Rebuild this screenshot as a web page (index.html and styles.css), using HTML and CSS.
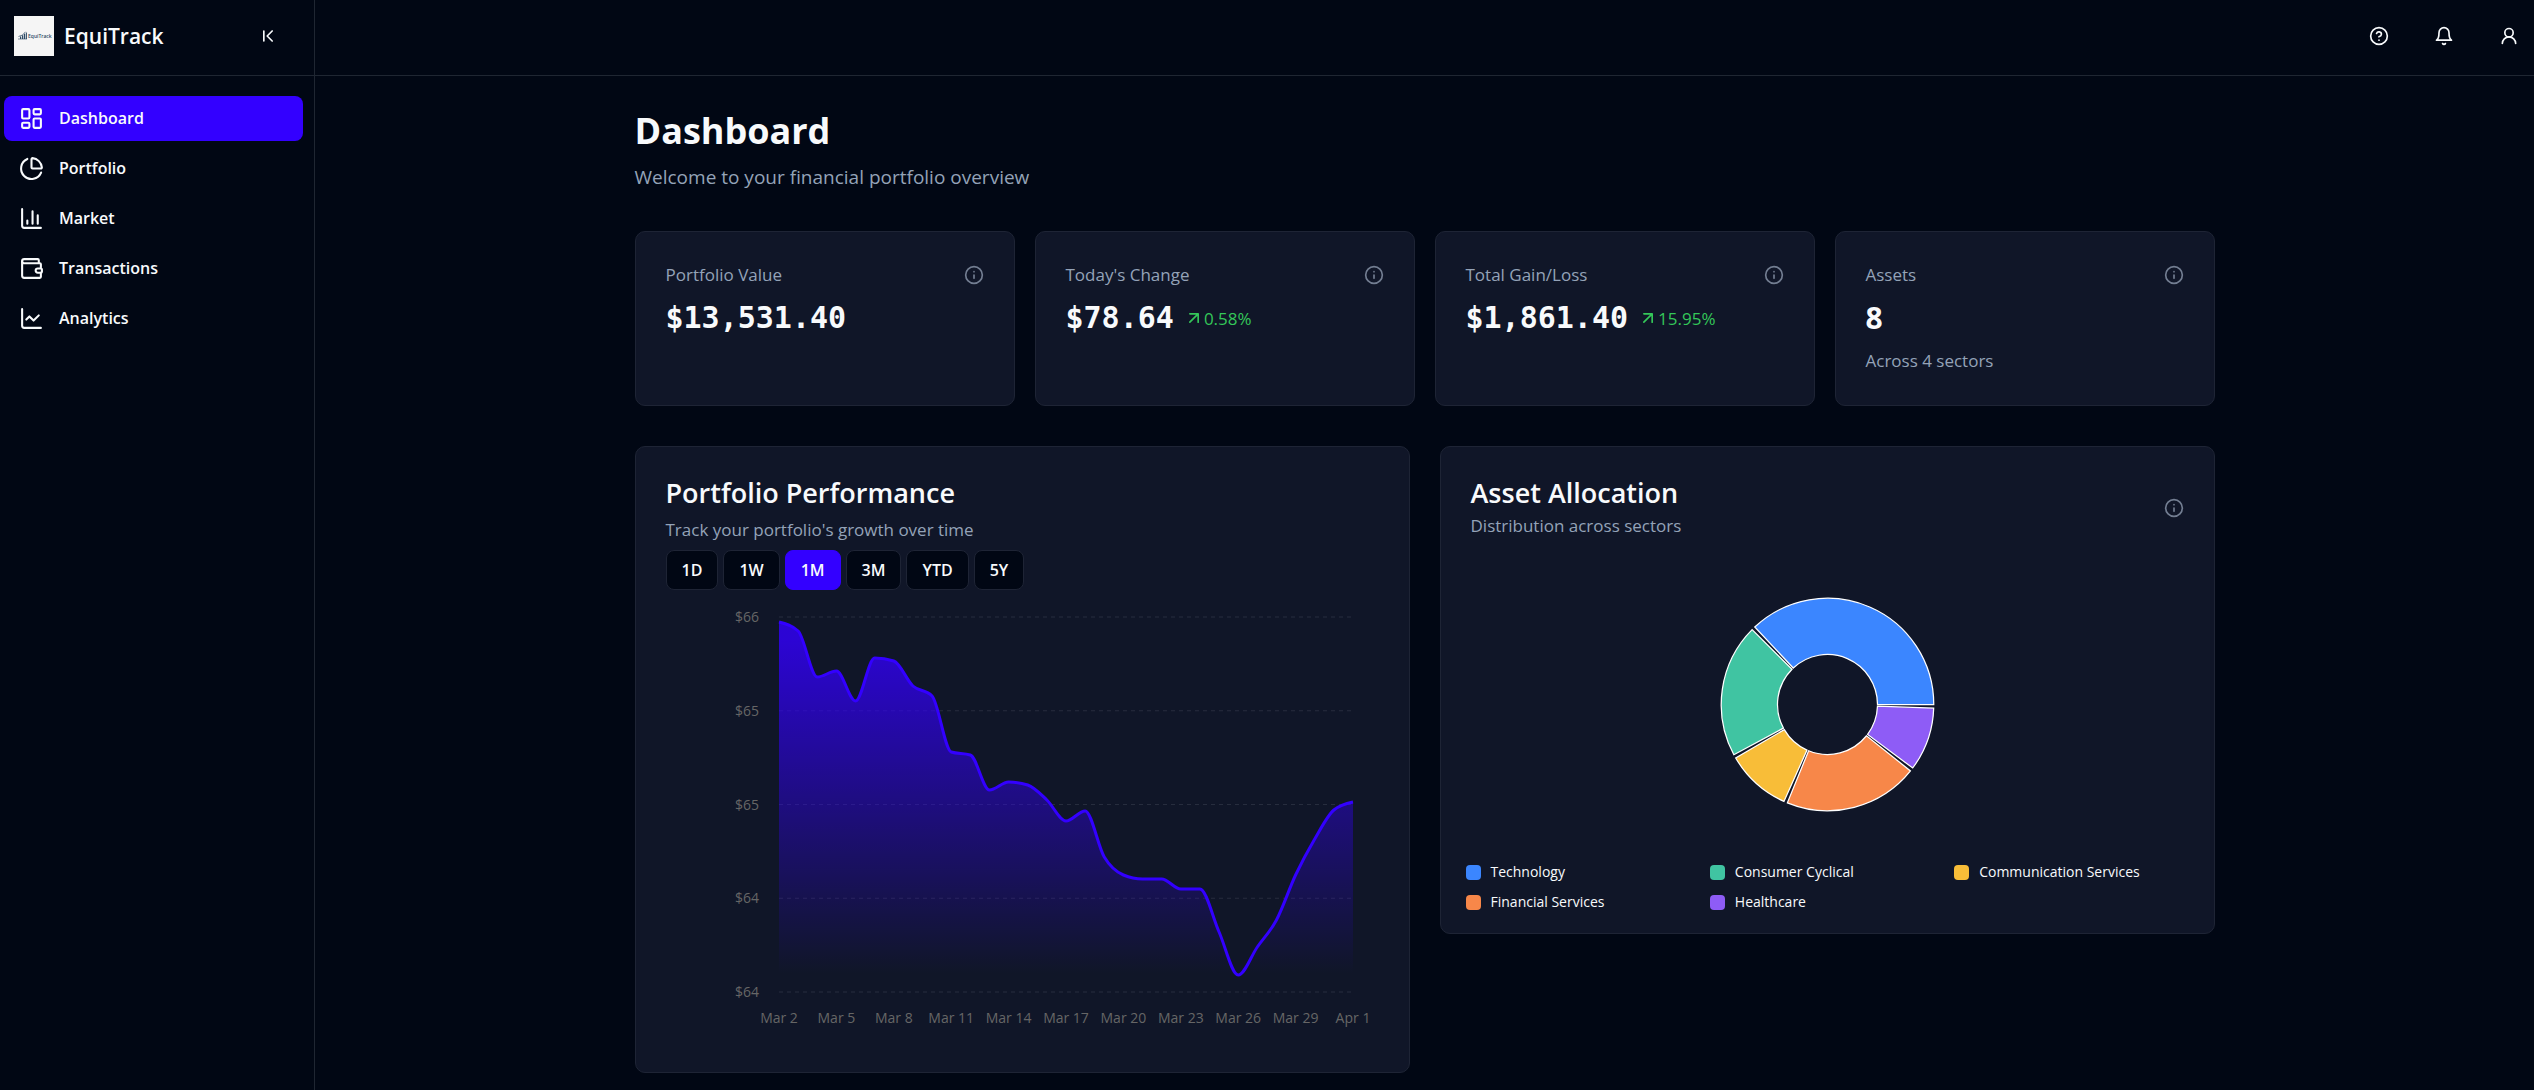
FILE: index.html
```html
<!DOCTYPE html>
<html lang="en">
<head>
<meta charset="utf-8">
<meta name="viewport" content="width=device-width, initial-scale=1">
<title>EquiTrack</title>
<link rel="stylesheet" href="styles.css">
</head>
<body>
<svg class="sprite" aria-hidden="true">
  <symbol id="i-info" viewBox="0 0 24 24"><circle cx="12" cy="12" r="10"/><path d="M12 16v-4M12 8h.01"/></symbol>
</svg>
<div class="app">
  <aside class="sidebar">
    <div class="brand">
      <svg class="logo" viewBox="0 0 40 40" role="img" aria-label="EquiTrack logo">
        <rect width="40" height="40" fill="#f5f5f5"/>
        <g fill="#2d4a66"><path d="M6 20.500h1.200V23H6zM8 19.200h1.300V23H8zM10 17.800h1.200V23H10zM11.900 16.500h1V23h-1z"/><path d="M4.500 20.500Q9 20 11.500 15.800" fill="none" stroke="#2d4a66" stroke-width=".7"/><path d="M4 23h9" stroke="#2d4a66" stroke-width=".6"/></g>
        <text class="logo-text" x="14" y="22">EquiTrack</text>
      </svg>
      <span class="brand-name">EquiTrack</span>
      <button class="icon-button collapse" type="button" aria-label="Collapse sidebar"><svg class="icon" viewBox="0 0 24 24"><path d="m17 18-6-6 6-6M7 6v12"/></svg></button>
    </div>
    <nav class="nav">
      <a class="nav-item active" href="#dashboard"><svg class="icon nav-icon" viewBox="0 0 24 24"><rect width="7" height="9" x="3" y="3" rx="1"/><rect width="7" height="5" x="14" y="3" rx="1"/><rect width="7" height="9" x="14" y="12" rx="1"/><rect width="7" height="5" x="3" y="16" rx="1"/></svg>Dashboard</a>
      <a class="nav-item" href="#portfolio"><svg class="icon nav-icon" viewBox="0 0 24 24"><path d="M21 12c.552 0 1.005-.449.95-.998a10 10 0 0 0-8.953-8.951c-.55-.055-.998.398-.998.95v8a1 1 0 0 0 1 1z"/><path d="M21.210 15.890A10 10 0 1 1 8 2.830"/></svg>Portfolio</a>
      <a class="nav-item" href="#market"><svg class="icon nav-icon" viewBox="0 0 24 24"><path d="M3 3v16a2 2 0 0 0 2 2h16M18 17V9M13 17V5M8 17v-3"/></svg>Market</a>
      <a class="nav-item" href="#transactions"><svg class="icon nav-icon" viewBox="0 0 24 24"><path d="M19 7V4a1 1 0 0 0-1-1H5a2 2 0 0 0 0 4h15a1 1 0 0 1 1 1v4h-3a2 2 0 0 0 0 4h3a1 1 0 0 0 1-1v-2a1 1 0 0 0-1-1"/><path d="M3 5v14a2 2 0 0 0 2 2h15a1 1 0 0 0 1-1v-4"/></svg>Transactions</a>
      <a class="nav-item" href="#analytics"><svg class="icon nav-icon" viewBox="0 0 24 24"><path d="M3 3v16a2 2 0 0 0 2 2h16M19 9l-5 5-4-4-3 3"/></svg>Analytics</a>
    </nav>
  </aside>

  <div class="page">
    <header class="topbar">
      <button class="icon-button" type="button" aria-label="Help"><svg class="icon" viewBox="0 0 24 24"><circle cx="12" cy="12" r="10"/><path d="M9.090 9a3 3 0 0 1 5.830 1c0 2-3 3-3 3M12 17h.01"/></svg></button>
      <button class="icon-button" type="button" aria-label="Notifications"><svg class="icon" viewBox="0 0 24 24"><path d="M6 8a6 6 0 0 1 12 0c0 7 3 9 3 9H3s3-2 3-9M10.300 21a1.940 1.940 0 0 0 3.400 0"/></svg></button>
      <button class="icon-button" type="button" aria-label="Account"><svg class="icon" viewBox="0 0 24 24"><circle cx="12" cy="8" r="5"/><path d="M20 21a8 8 0 0 0-16 0"/></svg></button>
    </header>

    <main class="content">
      <div class="intro">
        <h1>Dashboard</h1>
        <p class="lead">Welcome to your financial portfolio overview</p>
      </div>

      <section class="stats">
        <article class="card stat">
          <div class="stat-head"><h2 class="label">Portfolio Value</h2><svg class="icon info"><use href="#i-info"/></svg></div>
          <div class="stat-row"><span class="money">$13,531.40</span></div>
        </article>
        <article class="card stat">
          <div class="stat-head"><h2 class="label">Today's Change</h2><svg class="icon info"><use href="#i-info"/></svg></div>
          <div class="stat-row"><span class="money">$78.64</span><span class="gain"><svg class="icon" viewBox="0 0 24 24"><path d="M7 7h10v10M7 17 17 7"/></svg>0.58%</span></div>
        </article>
        <article class="card stat">
          <div class="stat-head"><h2 class="label">Total Gain/Loss</h2><svg class="icon info"><use href="#i-info"/></svg></div>
          <div class="stat-row"><span class="money">$1,861.40</span><span class="gain"><svg class="icon" viewBox="0 0 24 24"><path d="M7 7h10v10M7 17 17 7"/></svg>15.95%</span></div>
        </article>
        <article class="card stat">
          <div class="stat-head"><h2 class="label">Assets</h2><svg class="icon info"><use href="#i-info"/></svg></div>
          <div class="stat-row"><span class="count">8</span></div>
          <p class="muted">Across 4 sectors</p>
        </article>
      </section>

      <section class="charts">
        <article class="card performance">
          <h2 class="card-title">Portfolio Performance</h2>
          <p class="muted">Track your portfolio's growth over time</p>
          <div class="ranges">
            <button class="range" type="button">1D</button>
            <button class="range" type="button">1W</button>
            <button class="range selected" type="button">1M</button>
            <button class="range" type="button">3M</button>
            <button class="range" type="button">YTD</button>
            <button class="range" type="button">5Y</button>
          </div>
          <svg class="area-chart" id="area-chart" viewBox="0 0 713 452" role="img" aria-label="Portfolio value, Mar 2 to Apr 1">
            <defs><linearGradient id="fill" x1="0" y1="0" x2="0" y2="1"><stop offset="5%" stop-color="#3300ff" stop-opacity=".8"/><stop offset="95%" stop-color="#3300ff" stop-opacity="0"/></linearGradient></defs>
            <g class="grid-lines"></g>
            <path class="area"/>
            <path class="line"/>
            <g class="ticks"></g>
          </svg>
        </article>

        <article class="card allocation">
          <div class="allocation-head">
            <div>
              <h2 class="card-title">Asset Allocation</h2>
              <p class="muted">Distribution across sectors</p>
            </div>
            <svg class="icon info"><use href="#i-info"/></svg>
          </div>
          <svg class="donut" id="donut" viewBox="-86 -86 172 172" role="img" aria-label="Asset allocation by sector"></svg>
          <ul class="legend">
            <li><span class="swatch technology"></span>Technology</li>
            <li><span class="swatch consumer"></span>Consumer Cyclical</li>
            <li><span class="swatch communication"></span>Communication Services</li>
            <li><span class="swatch financial"></span>Financial Services</li>
            <li><span class="swatch healthcare"></span>Healthcare</li>
          </ul>
        </article>
      </section>
    </main>
  </div>
</div>
<script src="script.js"></script>
</body>
</html>
```
FILE: styles.css
```css
:root {
  --bg: #010714;
  --card: #101628;
  --border: #1e2435;
  --rule: #1f2632;
  --text: #f8fafc;
  --muted: #94a3b8;
  --info: #737e92;
  --primary: #3300ff;
  --green: #34c759;
  --technology: #3b86ff;
  --consumer: #40c4a2;
  --communication: #f8bd38;
  --financial: #f78749;
  --healthcare: #8e5cf6;
}

* { box-sizing: border-box; }

body {
  margin: 0;
  background: var(--bg);
  color: var(--text);
  font: 17px/25px "Open Sans", "Noto Sans", sans-serif;
}

h1, h2, p, ul { margin: 0; padding: 0; }
button { font: inherit; color: inherit; cursor: pointer; }

.sprite { display: none; }

.icon {
  width: 20px;
  height: 20px;
  flex: none;
  fill: none;
  stroke: currentColor;
  stroke-width: 2;
  stroke-linecap: round;
  stroke-linejoin: round;
}

.info { color: var(--info); }

.app { display: flex; min-height: 100vh; }

.sidebar {
  width: 315px;
  flex: none;
  border-right: 1px solid var(--rule);
}

.brand {
  display: flex;
  align-items: center;
  gap: 10px;
  height: 76px;
  padding: 0 21px 4px 14px;
  border-bottom: 1px solid var(--rule);
}

.logo { width: 40px; height: 40px; }
.logo-text { font-size: 5px; font-weight: 600; fill: #2d4a66; }
.brand-name { font-size: 21px; font-weight: 600; line-height: 30px; }

.icon-button {
  display: grid;
  place-items: center;
  width: 50px;
  height: 50px;
  padding: 0;
  border: 0;
  background: none;
}

.collapse { margin-left: auto; }

.nav {
  display: flex;
  flex-direction: column;
  gap: 5px;
  padding: 20px 11px 20px 4px;
}

.nav-item {
  display: flex;
  align-items: center;
  gap: 15px;
  height: 45px;
  padding: 0 15px;
  border-radius: 8px;
  color: var(--text);
  font-size: 16px;
  font-weight: 600;
  text-decoration: none;
}

.nav-item.active { background: var(--primary); }
.nav-icon { width: 25px; height: 25px; }

.page { flex: 1; min-width: 0; }

.topbar {
  display: flex;
  align-items: center;
  justify-content: flex-end;
  gap: 15px;
  height: 76px;
  padding-bottom: 4px;
  border-bottom: 1px solid var(--rule);
}

.content {
  max-width: 1640px;
  margin: 0 auto;
  padding: 30px 30px 16px;
}

h1 { font-size: 36px; font-weight: 700; line-height: 50px; }
.lead { margin-top: 7px; color: var(--muted); font-size: 19px; line-height: 28px; }

.card {
  background: var(--card);
  border: 1px solid var(--border);
  border-radius: 10px;
}

.stats {
  display: grid;
  grid-template-columns: repeat(4, 1fr);
  gap: 20px;
  margin-top: 40px;
}

.stat { min-height: 175px; padding: 30px 30px 28px; }

.stat-head {
  display: flex;
  align-items: center;
  justify-content: space-between;
}

.label { color: var(--muted); font-size: 17px; font-weight: 500; line-height: 26px; }
.stat-row { display: flex; align-items: center; gap: 10px; height: 60px; }
.money { font: 700 30px/40px "DejaVu Sans Mono", monospace; }
.count { font-size: 30px; font-weight: 700; line-height: 40px; }
.gain { display: flex; align-items: center; color: var(--green); }
.muted { color: var(--muted); font-size: 17px; line-height: 25px; }

.charts {
  display: grid;
  grid-template-columns: repeat(2, 1fr);
  align-items: start;
  gap: 30px;
  margin-top: 40px;
}

.card-title { font-size: 27px; font-weight: 600; line-height: 32px; }

.performance { padding: 30px; }
.performance .muted { margin-top: 8px; }
.ranges { display: flex; gap: 5px; margin-top: 8px; }

.range {
  height: 40px;
  padding: 0 15px;
  border: 1px solid var(--border);
  border-radius: 8px;
  background: var(--bg);
  font-size: 16px;
  font-weight: 600;
}

.range.selected { background: var(--primary); border-color: var(--primary); }

.area-chart { display: block; width: 100%; height: auto; }
.area-chart text { fill: #666; font-size: 14px; }
.grid-lines { stroke: #272d3e; stroke-dasharray: 4 4; }
.area { fill: url(#fill); }
.line { fill: none; stroke: var(--primary); stroke-width: 3; }
.tick-x { text-anchor: middle; }
.tick-y { text-anchor: end; }

.allocation { padding: 30px 25px 21px; }

.allocation-head {
  display: flex;
  align-items: center;
  justify-content: space-between;
  padding: 0 5px;
}

.allocation .muted { margin-top: 4px; }

.donut { display: block; width: 215px; margin: 59px auto 50px; }
.donut path { stroke: #fff; stroke-width: 1; }
.technology { fill: var(--technology); background: var(--technology); }
.consumer { fill: var(--consumer); background: var(--consumer); }
.communication { fill: var(--communication); background: var(--communication); }
.financial { fill: var(--financial); background: var(--financial); }
.healthcare { fill: var(--healthcare); background: var(--healthcare); }

.legend {
  display: grid;
  grid-template-columns: repeat(3, 1fr);
  gap: 10px;
  list-style: none;
  font-size: 14px;
  line-height: 20px;
}

.legend li { display: flex; align-items: center; gap: 10px; }
.swatch { width: 15px; height: 15px; border-radius: 4px; }
```
FILE: script.js
```js
const NS = 'http://www.w3.org/2000/svg';

function add(parent, name, attrs, text) {
  const node = document.createElementNS(NS, name);
  for (const key in attrs) node.setAttribute(key, attrs[key]);
  if (text) node.textContent = text;
  parent.appendChild(node);
  return node;
}

// Area chart: distance of each day's value below the top grid line
const depths = [5, 14, 60, 54, 84, 41, 44, 69, 79, 135, 138, 173, 165, 168, 183,
  204, 194, 240, 258, 262, 262, 272, 272, 315, 358, 330, 303, 258, 222, 193, 185];
const left = 113, right = 687, top0 = 27, plotHeight = 375;
const step = (right - left) / (depths.length - 1);
const points = depths.map((d, i) => [left + i * step, top0 + d]);

// Monotone cubic interpolation through the points
function monotone(p) {
  const n = p.length;
  const s = [];
  for (let i = 0; i < n - 1; i++) s.push((p[i + 1][1] - p[i][1]) / (p[i + 1][0] - p[i][0]));
  const t = [];
  for (let i = 1; i < n - 1; i++) {
    const a = s[i - 1], b = s[i];
    t[i] = (Math.sign(a) + Math.sign(b)) * Math.min(Math.abs(a), Math.abs(b), Math.abs(a + b) / 4) || 0;
  }
  t[0] = (3 * s[0] - t[1]) / 2;
  t[n - 1] = (3 * s[n - 2] - t[n - 2]) / 2;
  let d = `M${p[0][0]},${p[0][1]}`;
  for (let i = 0; i < n - 1; i++) {
    const h = (p[i + 1][0] - p[i][0]) / 3;
    d += `C${p[i][0] + h},${p[i][1] + h * t[i]} ${p[i + 1][0] - h},${p[i + 1][1] - h * t[i + 1]} ${p[i + 1][0]},${p[i + 1][1]}`;
  }
  return d;
}

const chart = document.getElementById('area-chart');
const line = monotone(points);
chart.querySelector('.line').setAttribute('d', line);
chart.querySelector('.area').setAttribute('d', `${line}L${right},${top0 + plotHeight}L${left},${top0 + plotHeight}Z`);

const grid = chart.querySelector('.grid-lines');
const ticks = chart.querySelector('.ticks');
['$66', '$65', '$65', '$64', '$64'].forEach((label, i) => {
  const y = top0 + i * plotHeight / 4;
  add(grid, 'line', { x1: left, x2: right, y1: y, y2: y });
  add(ticks, 'text', { class: 'tick-y', x: 93, y: y + 5 }, label);
});
['Mar 2', 'Mar 5', 'Mar 8', 'Mar 11', 'Mar 14', 'Mar 17', 'Mar 20', 'Mar 23', 'Mar 26', 'Mar 29', 'Apr 1'].forEach((label, i) => {
  add(ticks, 'text', { class: 'tick-x', x: left + i * 3 * step, y: 433 }, label);
});

// Donut: start and end angle of each sector, counter-clockwise
const donut = document.getElementById('donut');
const at = (r, a) => `${r * Math.cos(a * Math.PI / 180)},${-r * Math.sin(a * Math.PI / 180)}`;
[['technology', 0, 133.2], ['consumer', 135.2, 208.2], ['communication', 210.2, 245.8], ['financial', 247.8, 321.3], ['healthcare', 323.3, 358]].forEach(([name, a, b]) => {
  add(donut, 'path', {
    class: name,
    d: `M${at(85, a)}A85,85 0 0 0 ${at(85, b)}L${at(40, b)}A40,40 0 0 1 ${at(40, a)}Z`
  });
});
```
